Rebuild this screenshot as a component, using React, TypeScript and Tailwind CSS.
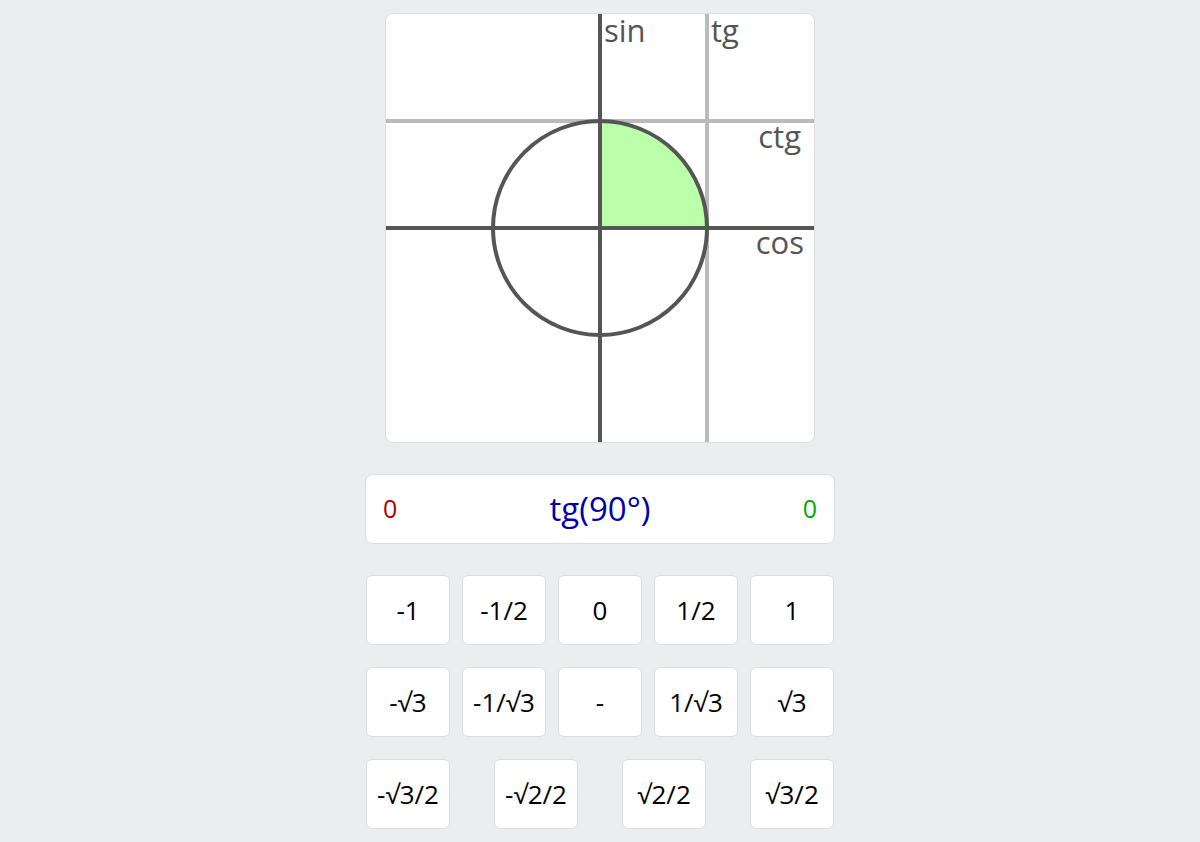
const rows: string[][] = [
  ['-1', '-1/2', '0', '1/2', '1'],
  ['-√3', '-1/√3', '-', '1/√3', '√3'],
  ['-√3/2', '-√2/2', '√2/2', '√3/2'],
];

function Circle() {
  // unit = 107px, centre at (214, 214)
  return (
    <svg width={428} height={428} viewBox="0 0 428 428" className="block">
      <path d="M214 214 L321 214 A107 107 0 0 0 214 107 Z" fill="#bbffaa" />
      <line x1={0} y1={107} x2={428} y2={107} stroke="#bbbbbb" strokeWidth={4} />
      <line x1={321} y1={0} x2={321} y2={428} stroke="#bbbbbb" strokeWidth={4} />
      <line x1={0} y1={214} x2={428} y2={214} stroke="#555555" strokeWidth={4} />
      <line x1={214} y1={0} x2={214} y2={428} stroke="#555555" strokeWidth={4} />
      <circle cx={214} cy={214} r={107} fill="none" stroke="#555555" strokeWidth={4} />
      <g fill="#555555" fontFamily="'Open Sans', sans-serif" fontSize={31}>
        <text x={218} y={28}>sin</text>
        <text x={325} y={28}>tg</text>
        <text x={415} y={134} textAnchor="end">ctg</text>
        <text x={418} y={240} textAnchor="end">cos</text>
      </g>
    </svg>
  );
}

export default function App() {
  return (
    <div className="min-h-[842px] bg-[#ecedef] flex flex-col items-center pt-[13px] font-['Open_Sans',sans-serif]">
      <div className="rounded-lg border border-[#dddddd] bg-white overflow-hidden">
        <Circle />
      </div>

      <div className="mt-[31px] w-[470px] h-[70px] rounded-lg border border-[#dddddd] bg-white flex items-center justify-between px-[17px]">
        <span className="text-[25px] text-[#aa0000]">0</span>
        <span className="text-[33px] text-[#0000aa]">tg(90°)</span>
        <span className="text-[25px] text-[#00aa00]">0</span>
      </div>

      <div className="mt-[31px] w-[468px] flex flex-col gap-[22px]">
        {rows.map((row, i) => (
          <div key={i} className="flex justify-between">
            {row.map((v) => (
              <button
                key={v}
                className="w-[84px] h-[70px] rounded-md border border-[#dddddd] bg-white text-[26px] text-black flex items-center justify-center"
              >
                {v}
              </button>
            ))}
          </div>
        ))}
      </div>
    </div>
  );
}
